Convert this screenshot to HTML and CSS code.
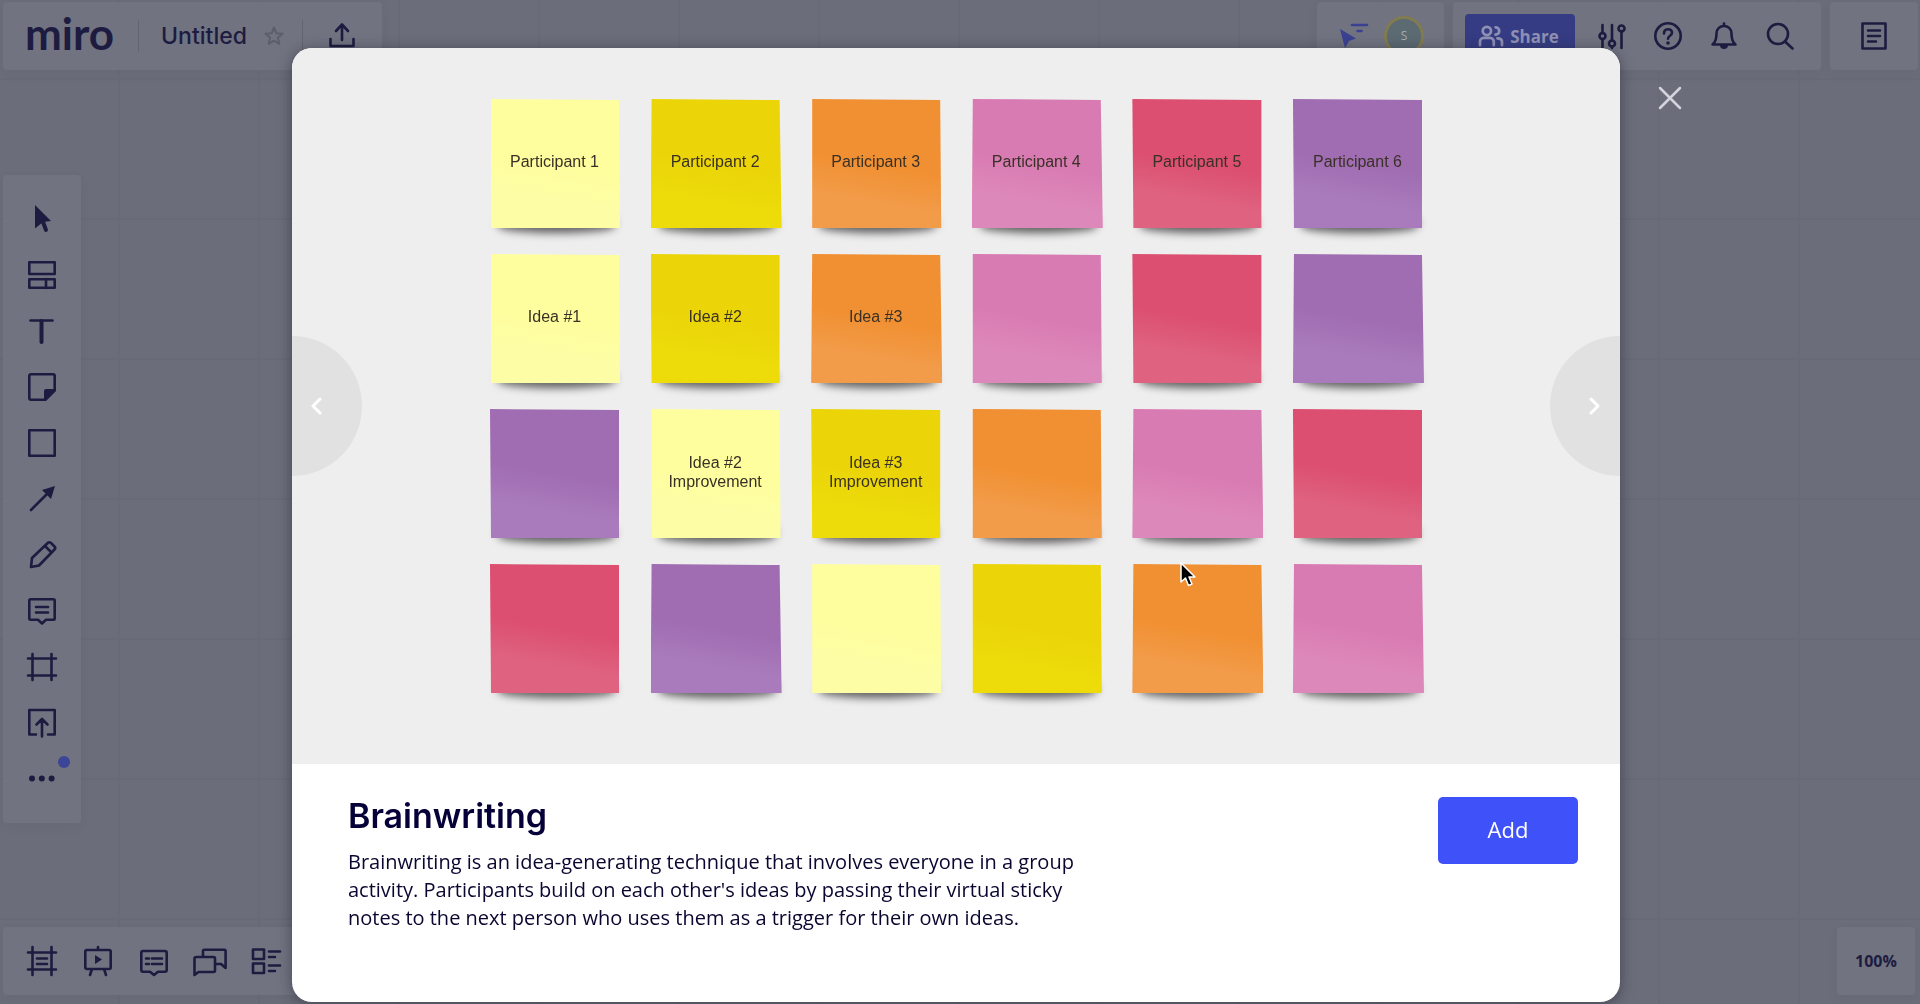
FILE: index.html
```html
<!DOCTYPE html>
<html lang="en">
<head>
<meta charset="utf-8">
<title>Untitled - Miro</title>
<meta name="viewport" content="width=device-width, initial-scale=1">
<link rel="stylesheet" href="styles.css">
</head>
<body>
<div class="board">
  <header class="topbar">
    <div class="panel board-info">
      <a class="logo" href="#">miro</a>
      <span class="divider"></span>
      <span class="board-name">Untitled</span>
      <button class="star" aria-label="Star this board"><svg class="star-icon" viewBox="0 0 20 20"><path d="M10 1.500l2.400 5.800 6.100.5-4.700 4 1.500 6L10 14.600 4.700 17.800l1.500-6-4.700-4 6.100-.5z"/></svg></button>
      <span class="divider"></span>
      <button class="tool" aria-label="Export"><svg class="icon" viewBox="0 0 28 28"><path d="M14 18V3M8 9l6-6.500L20 9M2.500 17v7h23v-7"/></svg></button>
    </div>
    <div class="topbar-right">
      <div class="panel people">
        <button class="follow" aria-label="Cursors"><svg class="icon" viewBox="0 0 28 28"><path class="solid" d="M1 7l16 9.500-7 2.500-4 7z"/><path d="M13 3h15M18.500 9h4"/></svg></button>
        <span class="avatar">S</span>
      </div>
      <div class="panel actions">
        <button class="share"><svg class="share-icon" viewBox="0 0 28 24"><circle cx="9.500" cy="6.500" r="4.500"/><path d="M2 22v-4c0-2 2-4 4-4h7c2 0 4 2 4 4v4M19 2.500a4 4 0 1 1 0 8M21 14.500c3 0 5 1.500 5 4V22"/></svg>Share</button>
        <div class="tools">
          <button class="tool" aria-label="Settings"><svg class="icon" viewBox="0 0 28 28"><path d="M4.500 3v8M4.500 17v9M14 3v16M14 25v1M23.500 9v17"/><circle cx="4.500" cy="14" r="3"/><circle cx="14" cy="21.500" r="3"/><circle cx="23.500" cy="6.500" r="3"/></svg></button>
          <button class="tool" aria-label="Help"><svg class="icon" viewBox="0 0 28 28"><circle cx="14" cy="14" r="12.700"/><path d="M10 11.500c0-5.500 8-5.500 8-.8 0 3-4 3-4 6"/><circle class="solid" cx="14" cy="21" r="1.800"/></svg></button>
          <button class="tool" aria-label="Notifications"><svg class="icon" viewBox="0 0 28 28"><path d="M2.500 22.500h23c-2.500-2-4-5-4-11 0-10-15-10-15 0 0 6-1.500 9-4 11z"/><path class="solid" d="M10 23h8a4 4 0 0 1-8 0z"/><path d="M14 3V1.500"/></svg></button>
          <button class="tool" aria-label="Search"><svg class="icon" viewBox="0 0 28 28"><circle cx="12" cy="12" r="10"/><path d="M19 19.500l7.500 7"/></svg></button>
        </div>
      </div>
      <div class="panel notes-panel">
        <button class="tool" aria-label="Notes"><svg class="icon" viewBox="0 0 28 28"><path d="M2.500 1.500h23v25h-23zM8 8.500h12M8 14h12M8 19.500h8"/></svg></button>
      </div>
    </div>
  </header>

  <nav class="panel toolbar" aria-label="Tools">
    <button class="tool" aria-label="Select"><svg class="icon" viewBox="0 0 28 28"><path class="solid" d="M7 0l16 16-8 1-8 6.500z"/><path class="thick" d="M15 17l3 8"/></svg></button>
    <button class="tool" aria-label="Templates"><svg class="icon" viewBox="0 0 28 28"><path d="M1.300 1.300h25.400v11.700H1.300zM1.300 18.300h25.400v8.400H1.300zM18 18v9"/></svg></button>
    <button class="tool" aria-label="Text"><svg class="icon" viewBox="0 0 28 28"><path d="M2.500 3.500h22"/><path class="thick" d="M13.500 4v21"/></svg></button>
    <button class="tool" aria-label="Sticky note"><svg class="icon" viewBox="0 0 28 28"><path d="M3 1.300h22q1.700 0 1.700 1.700v14L17 26.700H3q-1.700 0-1.700-1.700V3q0-1.700 1.700-1.700z"/><path class="solid" d="M28 16v2L18 28h-2V18q0-2 2-2z"/></svg></button>
    <button class="tool" aria-label="Shape"><svg class="icon" viewBox="0 0 28 28"><path d="M1.300 1.300h25.400v25.400H1.300z"/></svg></button>
    <button class="tool" aria-label="Connection line"><svg class="icon" viewBox="0 0 28 28"><path d="M3 25L20 8"/><path class="solid" d="M27 1l-4 13-9-9z"/></svg></button>
    <button class="tool" aria-label="Pen"><svg class="icon" viewBox="0 0 28 28"><path d="M3 26l1-9L20 1.700q1.500-1 3 .3l3.500 3.500q1.500 1.500 0 3L11 24.500zM17 5l6.500 6.500"/></svg></button>
    <button class="tool" aria-label="Comment"><svg class="icon" viewBox="0 0 28 28"><path d="M2.500 2.300h23q1.200 0 1.200 1.200v18q0 1.200-1.200 1.200H18L14 26.500l-4-3.800H2.500q-1.200 0-1.200-1.200v-18q0-1.200 1.200-1.200zM8 10h12M8 15.500h12"/></svg></button>
    <button class="tool" aria-label="Frame"><svg class="icon" viewBox="0 0 28 28"><path d="M4.500 1v26M23.500 1v26M0 5.500h28M0 22.500h28"/></svg></button>
    <button class="tool" aria-label="Upload"><svg class="icon" viewBox="0 0 28 28"><path d="M8 25.500H1.300V1h25.400v24.500H20M14 27.500V10.500M8.500 15.500L14 10l5.500 5.500"/></svg></button>
    <button class="tool more" aria-label="More tools"><svg class="icon" viewBox="0 0 28 28"><g class="solid"><circle cx="4" cy="13.500" r="3"/><circle cx="13.800" cy="13.500" r="3"/><circle cx="23.600" cy="13.500" r="3"/></g></svg><span class="badge"></span></button>
  </nav>

  <footer class="bottombar">
    <div class="panel views">
      <button class="tool" aria-label="Frames"><svg class="icon" viewBox="0 0 28 28"><path d="M4.500 0v28M23.500 0v28M0 5.500h28M0 22.500h28M9 11.500h10M9 17h10"/></svg></button>
      <button class="tool" aria-label="Present"><svg class="icon" viewBox="0 0 28 28"><path d="M3 3h22q1.700 0 1.700 1.500v16q0 1.500-1.700 1.500H3q-1.700 0-1.700-1.500v-16Q1.300 3 3 3zM14 3V0M8 22l-2 6M20 22l2 6"/><path class="solid" d="M11 8v9l7-4.500z"/></svg></button>
      <button class="tool" aria-label="Comments"><svg class="icon" viewBox="0 0 28 28"><path d="M3 4h22q1.700 0 1.700 1.700V23q0 1.700-1.700 1.700h-7L14 28l-4-3.300H3q-1.700 0-1.700-1.700V5.700Q1.300 4 3 4zM6 11.500h3M12 11.500h10M6 17h3M12 17h10"/></svg></button>
      <button class="tool" aria-label="Chat"><svg class="icon chat" viewBox="0 0 34 28"><path d="M10 9V4q0-1.300 1.300-1.300h20q1.300 0 1.300 1.300v17l-4.500-4H22M3.500 10h17q1.500 0 1.500 1.500v12q0 1.500-1.500 1.500H5.500L1.500 28V11.500q0-1.500 2-1.500z"/></svg></button>
      <button class="tool" aria-label="Cards"><svg class="icon" viewBox="0 0 28 28"><path d="M1 2.500h11v9.500H1zM1 16.500h11V26H1zM17 4.500h11M17 10h6M17 18.500h11M17 24h6"/></svg></button>
    </div>
    <button class="panel zoom-level">100%</button>
  </footer>
</div>

<div class="overlay">
  <section class="modal" role="dialog" aria-labelledby="template-title">
    <div class="preview">
      <div class="notes">
        <div class="note light tilt-a"><span>Participant 1</span></div>
        <div class="note yellow tilt-b"><span>Participant 2</span></div>
        <div class="note orange tilt-a"><span>Participant 3</span></div>
        <div class="note pink tilt-b"><span>Participant 4</span></div>
        <div class="note red tilt-c"><span>Participant 5</span></div>
        <div class="note purple tilt-c"><span>Participant 6</span></div>

        <div class="note light tilt-a"><span>Idea #1</span></div>
        <div class="note yellow tilt-c"><span>Idea #2</span></div>
        <div class="note orange tilt-b"><span>Idea #3</span></div>
        <div class="note pink tilt-a"></div>
        <div class="note red tilt-c"></div>
        <div class="note purple tilt-b"></div>

        <div class="note purple tilt-c"></div>
        <div class="note light tilt-a"><span>Idea #2 Improvement</span></div>
        <div class="note yellow tilt-c"><span>Idea #3 Improvement</span></div>
        <div class="note orange tilt-a"></div>
        <div class="note pink tilt-b"></div>
        <div class="note red tilt-c"></div>

        <div class="note red tilt-c"></div>
        <div class="note purple tilt-b"></div>
        <div class="note light tilt-a"></div>
        <div class="note yellow tilt-a"></div>
        <div class="note orange tilt-b"></div>
        <div class="note pink tilt-b"></div>
      </div>
      <button class="nav prev" aria-label="Previous"><svg class="chevron" viewBox="0 0 12 18"><path d="M10 2L3 9l7 7"/></svg></button>
      <button class="nav next" aria-label="Next"><svg class="chevron" viewBox="0 0 12 18"><path d="M2 2l7 7-7 7"/></svg></button>
      <svg class="pointer" viewBox="0 0 16 25"><path d="M1 1v19l4.500-4 3 7.500 3.500-1.500-3-7h6z"/></svg>
    </div>
    <div class="details">
      <div class="about">
        <h1 id="template-title">Brainwriting</h1>
        <p>Brainwriting is an idea-generating technique that involves everyone in a group activity. Participants build on each other's ideas by passing their virtual sticky notes to the next person who uses them as a trigger for their own ideas.</p>
      </div>
      <button class="add">Add</button>
    </div>
  </section>
  <button class="close" aria-label="Close"><svg class="close-icon" viewBox="0 0 24 24"><path d="M2 2l20 20M22 2L2 22"/></svg></button>
</div>
</body>
</html>
```
FILE: styles.css
```css
* { box-sizing: border-box; }

body {
  margin: 0;
  font-family: "Open Sans", "Noto Sans", sans-serif;
  color: #1d1c40;
  background: #6b6d7a;
}

button {
  margin: 0;
  padding: 0;
  border: 0;
  background: none;
  color: inherit;
  font: inherit;
}

svg {
  display: block;
  fill: none;
  stroke: currentColor;
  stroke-linecap: round;
  stroke-linejoin: round;
}

/* Board behind the dialog */
.board {
  min-height: 100vh;
  display: flex;
  flex-direction: column;
  justify-content: space-between;
  padding: 2px 2px 9px 3px;
  background-image:
    linear-gradient(90deg, #686a76 2px, transparent 2px),
    linear-gradient(#686a76 2px, transparent 2px);
  background-size: 140px 140px;
  background-position: 118px 78px;
}

.panel {
  display: flex;
  align-items: center;
  border-radius: 4px;
  background: #717380;
  box-shadow: 0 4px 12px rgba(50, 50, 70, 0.06);
}

.topbar, .bottombar {
  display: flex;
  justify-content: space-between;
}

.topbar .panel, .bottombar .panel { height: 68px; }

.board-info { padding: 0 12px 0 22px; }

.logo {
  padding-bottom: 6px;
  color: #1d1c40;
  font: 700 44px/56px Lato, sans-serif;
  text-decoration: none;
}

.divider {
  width: 1px;
  height: 32px;
  margin: 0 22px 0 24px;
  background: #62646f;
}

.board-name { font: 500 23px/28px Inter, sans-serif; }

.star { margin-left: 17px; color: #5c5e6b; }
.star-icon { width: 20px; height: 20px; stroke-width: 2; }
.star + .divider { margin: 0 11px 0 18px; }

.topbar-right { display: flex; gap: 9px; }

.people { width: 127px; padding-left: 22px; gap: 17px; }
.follow { color: #3a4190; }

.avatar {
  width: 40px;
  height: 40px;
  border: 3px solid #807b50;
  border-radius: 50%;
  background: #5c6a72;
  color: #a4adb2;
  font-size: 12px;
  line-height: 34px;
  text-align: center;
}

.actions { padding: 0 13px 0 12px; gap: 9px; }

.share {
  display: flex;
  align-items: center;
  justify-content: center;
  gap: 6px;
  width: 110px;
  height: 44px;
  padding-right: 3px;
  border-radius: 4px;
  background: #363c83;
  color: #8e91b4;
  font-size: 17px;
  font-weight: 700;
}
.share-icon { width: 26px; height: 22px; stroke-width: 3; }

.tools { display: flex; }
.notes-panel { width: 88px; justify-content: center; }

.tool {
  display: flex;
  align-items: center;
  justify-content: center;
  width: 56px;
  height: 56px;
}

.icon { width: 28px; height: 28px; stroke-width: 2.600; overflow: visible; }
.icon.chat { width: 34px; }
.solid { fill: currentColor; stroke: none; }
.thick { stroke-width: 4; }

.toolbar {
  align-self: flex-start;
  flex-direction: column;
  width: 78px;
  padding: 16px 0;
}

.more { position: relative; }
.badge {
  position: absolute;
  top: 5px;
  right: 0;
  width: 12px;
  height: 12px;
  border-radius: 50%;
  background: #3c4597;
}

.views { padding: 0 11px; }

.zoom-level {
  justify-content: center;
  width: 78px;
  margin-right: 3px;
  font-size: 16px;
  font-weight: 700;
}

/* Dialog */
.overlay {
  position: fixed;
  inset: 0;
  display: flex;
  align-items: flex-start;
  padding: 48px 238px 3px 292px;
}

.modal {
  flex: 1;
  overflow: hidden;
  border-radius: 20px;
  background: #fff;
  box-shadow: 0 2px 14px rgba(30, 30, 45, 0.5);
}

.preview {
  position: relative;
  padding: 51px 0 71px;
  background: #eee;
}

.notes {
  display: grid;
  grid-template-columns: repeat(6, 129px);
  justify-content: space-between;
  row-gap: 26px;
  width: 932px;
  margin: 0 auto;
}

.note {
  position: relative;
  z-index: 0;
  display: flex;
  align-items: center;
  justify-content: center;
  height: 129px;
  padding: 0 12px 4px;
  color: #3a3126;
  font: 16px/19px "Liberation Sans", Arial, sans-serif;
  text-align: center;
}

/* soft shadow under the lower edge */
.note::before {
  content: "";
  position: absolute;
  z-index: -2;
  left: 8px;
  right: 4px;
  bottom: -5px;
  height: 14px;
  border-radius: 0 0 50% 50%;
  background: rgba(0, 0, 0, 0.6);
  filter: blur(4px);
}

/* paper */
.note::after {
  content: "";
  position: absolute;
  z-index: -1;
  inset: 0 -2px 0 0;
  background: linear-gradient(190deg, var(--paper) 50%, var(--shine) 76%);
}

.tilt-a::after { clip-path: polygon(1px 0, 129px 1px, 130px 100%, 1px 100%); }
.tilt-b::after { clip-path: polygon(1px 0, 129px 1px, 100% 100%, 0 100%); }
.tilt-c::after { clip-path: polygon(0 0, 129px 1px, 129px 100%, 1px 100%); }

.light { --paper: #fefe9e; --shine: #fdfda6; }
.yellow { --paper: #ebd509; --shine: #eddb0a; }
.orange { --paper: #f19032; --shine: #f29b49; }
.pink { --paper: #d97bb3; --shine: #dd88ba; }
.red { --paper: #dc4f70; --shine: #df6381; }
.purple { --paper: #a06db2; --shine: #a97bbc; }

.nav {
  position: absolute;
  top: 50%;
  width: 70px;
  height: 140px;
  margin-top: -70px;
  background: #e1e1e1;
  color: #fff;
}
.prev { left: 0; padding-left: 18px; border-radius: 0 70px 70px 0; }
.next { right: 0; padding-left: 39px; border-radius: 70px 0 0 70px; }
.chevron { width: 12px; height: 18px; stroke-width: 3; }

.pointer {
  position: absolute;
  top: 514px;
  left: 67%;
  width: 16px;
  height: 25px;
  margin-left: -2px;
  fill: #000;
  stroke: #fff;
  stroke-width: 1.500;
}

.details {
  display: flex;
  align-items: flex-start;
  justify-content: space-between;
  padding: 28px 42px 70px 56px;
}

.about { max-width: 740px; color: #0a0630; }

h1 {
  margin: 0 0 8px;
  color: #050038;
  font: 600 34px/48px Inter, sans-serif;
}

p {
  margin: 0;
  font-size: 20px;
  line-height: 28px;
}

.add {
  width: 140px;
  height: 67px;
  margin-top: 5px;
  padding-bottom: 4px;
  border-radius: 5px;
  background: #3f51f9;
  color: #fff;
  font-size: 22px;
}

.close { margin: 38px 0 0 38px; color: #d3d4dc; }
.close-icon { width: 24px; height: 24px; stroke-width: 2.500; }
```
